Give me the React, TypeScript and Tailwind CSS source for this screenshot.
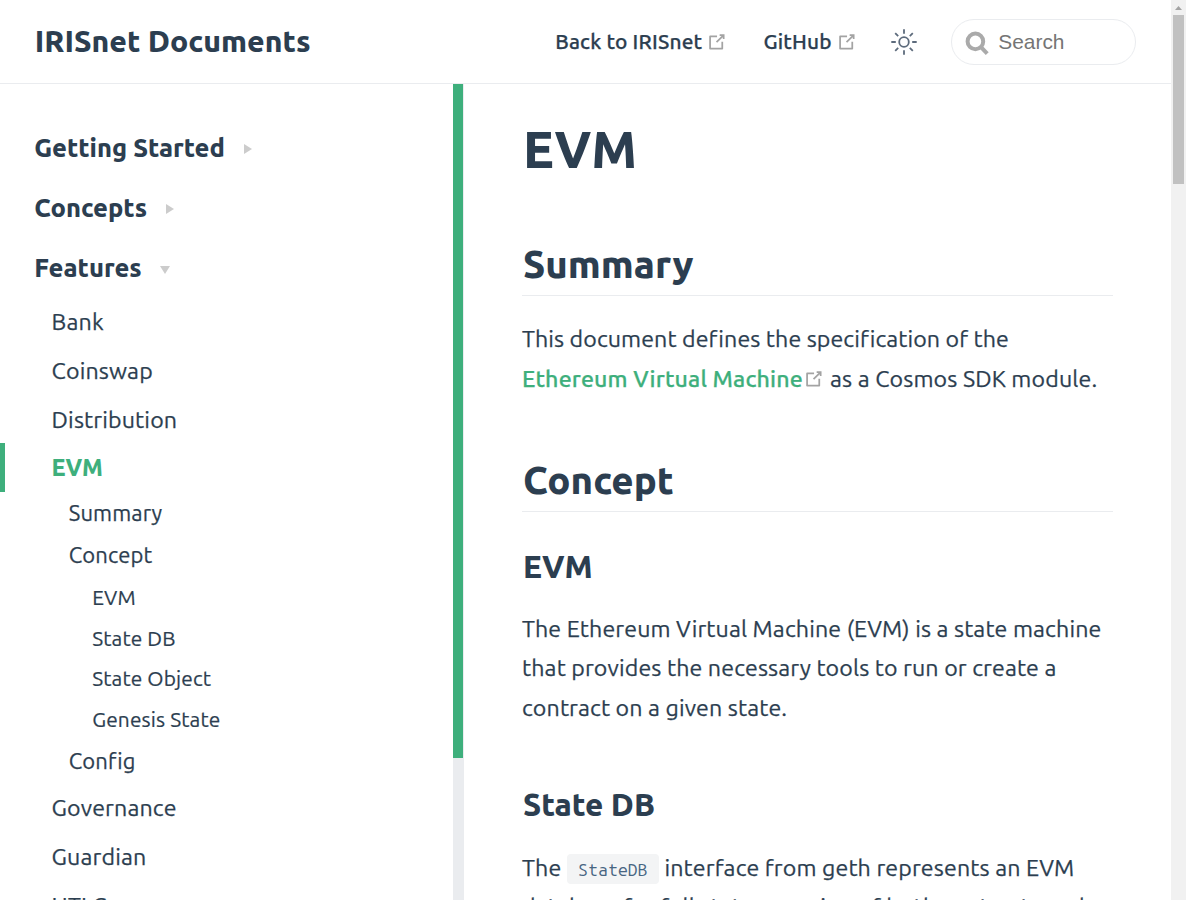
function Outbound({ className }: { className: string }) {
  return (
    <svg viewBox="0 0 100 100" className={`size-[21.75px] shrink-0 text-[#a3a3a3] ${className}`} aria-hidden="true">
      <path
        fill="currentColor"
        d="M18.8,85.1h56l0,0c2.2,0,4-1.8,4-4v-32h-8v28h-48v-48h28v-8h-32l0,0c-2.2,0-4,1.8-4,4v56C14.8,83.3,16.6,85.1,18.8,85.1z"
      />
      <polygon
        fill="currentColor"
        points="45.7,48.7 51.3,54.3 77.2,28.5 77.2,37.2 85.2,37.2 85.2,14.9 62.8,14.9 62.8,22.9 71.5,22.9"
      />
    </svg>
  );
}

function Sun() {
  return (
    <svg viewBox="-13 -13 26 26" className="size-[26px] shrink-0 text-[#5d6b7c]" fill="none" stroke="currentColor" strokeWidth="1.8" aria-hidden="true">
      <circle r="4.8" />
      <path d="M0 -12.7V-8.2M0 8.2V12.7M-12.7 0H-8.2M8.2 0H12.7M-8.8 -8.8L-5.8 -5.8M5.8 5.8L8.8 8.8M-8.8 8.8L-5.8 5.8M5.8 -5.8L8.8 -8.8" />
    </svg>
  );
}

function Magnifier() {
  return (
    <svg viewBox="0 0 24 24" className="size-6 shrink-0" fill="none" stroke="#aaaaaa" strokeWidth="4" aria-hidden="true">
      <circle cx="10.4" cy="10.4" r="7.8" />
      <path d="M15.8 15.8L22.2 22.6" />
    </svg>
  );
}

function Group({ label, open }: { label: string; open?: boolean }) {
  return (
    <div className="flex h-[60px] items-center pl-[34.2px] text-[25.5px] leading-[34px] font-extrabold">
      <span>{label}</span>
      {open ? (
        <svg viewBox="0 0 10 8" className="mt-[3px] ml-[18px] h-2 w-[10px]" fill="#cccccc"><path d="M0 0H10L5 8Z" /></svg>
      ) : (
        <svg viewBox="0 0 8 10" className="mt-[2px] ml-[19px] h-[10px] w-2" fill="#cccccc"><path d="M0 0L8 5L0 10Z" /></svg>
      )}
    </div>
  );
}

function Item({ label, active }: { label: string; active?: boolean }) {
  return active ? (
    <a className="flex h-[48.7px] items-center border-l-[5px] border-[#3eaf7c] pl-[46.4px] text-[23.2px] font-extrabold text-[#3eaf7c] tracking-[-0.2px]">{label}</a>
  ) : (
    <a className="flex h-[48.7px] items-center pl-[51.6px] text-[23.2px] tracking-[0.14px] [-webkit-text-stroke:0.25px_#2c3e50]">{label}</a>
  );
}

function SubItem({ label }: { label: string }) {
  return <a className="flex h-[42px] items-center pl-[68.8px] text-[22px] tracking-[0.1px] [-webkit-text-stroke:0.25px_#2c3e50]">{label}</a>;
}

function LeafItem({ label }: { label: string }) {
  return <a className="flex h-[40.7px] items-center pl-[92.2px] text-[20.9px] tracking-[0.14px] [-webkit-text-stroke:0.2px_#2c3e50]">{label}</a>;
}

export default function App() {
  return (
    <div className="flex h-[900px] w-[1186px] overflow-hidden bg-white font-['Ubuntu','Noto_Sans',sans-serif] text-[#2c3e50]">
      <div className="flex min-w-0 flex-1 flex-col">
        <header className="flex h-[84px] shrink-0 items-center border-b border-[#eaecef] pl-[34.8px]">
          <h1 className="flex-1 text-[30.2px] leading-[51px] font-extrabold">IRISnet Documents</h1>
          <nav className="flex items-center text-[20.9px] font-medium tracking-[0.16px] [-webkit-text-stroke:0.25px_#2c3e50]">
            <a className="flex items-center">Back to IRISnet<Outbound className="ml-1" /></a>
            <a className="ml-[35.5px] flex items-center">GitHub<Outbound className="ml-1" /></a>
          </nav>
          <div className="ml-[33.7px] flex"><Sun /></div>
          <div className="mr-[35px] ml-[33.8px] flex h-[46px] w-[185px] items-center gap-[9px] rounded-full border border-[#eaecef] pt-[2px] pl-[13.3px]">
            <Magnifier />
            <span className="-mt-[2px] font-['Liberation_Sans',sans-serif] text-[20.9px] text-[#757575]">Search</span>
          </div>
        </header>
        <div className="flex min-h-0 flex-1">
          <aside className="flex h-[816px] w-[464px] shrink-0 overflow-hidden border-r border-[#eaecef]">
            <div className="flex-1 pt-[34px]">
              <Group label="Getting Started" />
              <Group label="Concepts" />
              <Group label="Features" open />
              <div className="-mt-[0.8px]">
                <Item label="Bank" />
                <Item label="Coinswap" />
                <Item label="Distribution" />
                <Item label="EVM" active />
              </div>
              <SubItem label="Summary" />
              <SubItem label="Concept" />
              <div className="pt-[1.3px]">
                <LeafItem label="EVM" />
                <LeafItem label="State DB" />
                <LeafItem label="State Object" />
                <LeafItem label="Genesis State" />
              </div>
              <div className="-mt-[0.9px]"><SubItem label="Config" /></div>
              <div className="pt-[2.3px]">
                <Item label="Governance" />
                <Item label="Guardian" />
                <Item label="HTLC" />
              </div>
            </div>
            <div className="w-[10px] bg-[#eaecef]"><div className="h-[674px] bg-[#3eaf7c]" /></div>
          </aside>
          <main className="h-[816px] flex-1 overflow-hidden px-[58px] pt-[33px] text-[23.2px] leading-[39.44px]">
            <h1 className="pl-px text-[51px] leading-[64px] font-extrabold">EVM</h1>
            <h2 className="mt-[59px] h-14 border-b border-[#eaecef] pl-px text-[38.3px] leading-[48px] font-extrabold">Summary</h2>
            <p className="mt-[23.2px] tracking-[0.13px] whitespace-nowrap [-webkit-text-stroke:0.25px_#2c3e50]">
              <span className="tracking-[0.09px]">This document defines the specification of the</span><br />
              <a className="font-medium text-[#3eaf7c] [-webkit-text-stroke:0.25px_#3eaf7c]">Ethereum Virtual Machine</a>
              <Outbound className="relative -top-[2px] inline-block align-middle" /> as a Cosmos SDK module.
            </p>
            <h2 className="mt-[57.9px] h-14 border-b border-[#eaecef] pl-px text-[38.3px] leading-[48px] font-extrabold">Concept</h2>
            <h3 className="mt-[35px] pl-px text-[31.3px] leading-[39px] font-extrabold tracking-[-0.2px]">EVM</h3>
            <p className="mt-[23px] tracking-[0.12px] whitespace-nowrap [-webkit-text-stroke:0.25px_#2c3e50]">
              The Ethereum Virtual Machine (EVM) is a state machine<br />
              that provides the necessary tools to run or create a<br />
              contract on a given state.
            </p>
            <h3 className="mt-[57.7px] pl-px text-[31.3px] leading-[39px] font-extrabold">State DB</h3>
            <p className="mt-[23.6px] tracking-[0.13px] whitespace-nowrap [-webkit-text-stroke:0.25px_#2c3e50]">
              The <code className="rounded-[4px] bg-[#f3f4f5] px-[11.2px] py-[5.5px] font-['Ubuntu_Mono','Liberation_Mono',monospace] text-[17.6px] leading-none text-[#476582] [-webkit-text-stroke:0]">StateDB</code> interface from geth represents an EVM<br />
              database for full state querying of both contracts and
            </p>
          </main>
        </div>
      </div>
      <div className="flex w-[15px] shrink-0 flex-col items-center bg-[#f1f1f1]">
        <svg viewBox="0 0 15 15" className="size-[15px]" fill="#a3a3a3"><path d="M4 10L7.5 6L11 10Z" /></svg>
        <div className="h-[169px] w-[11px] bg-[#c1c1c1]" />
      </div>
    </div>
  );
}
